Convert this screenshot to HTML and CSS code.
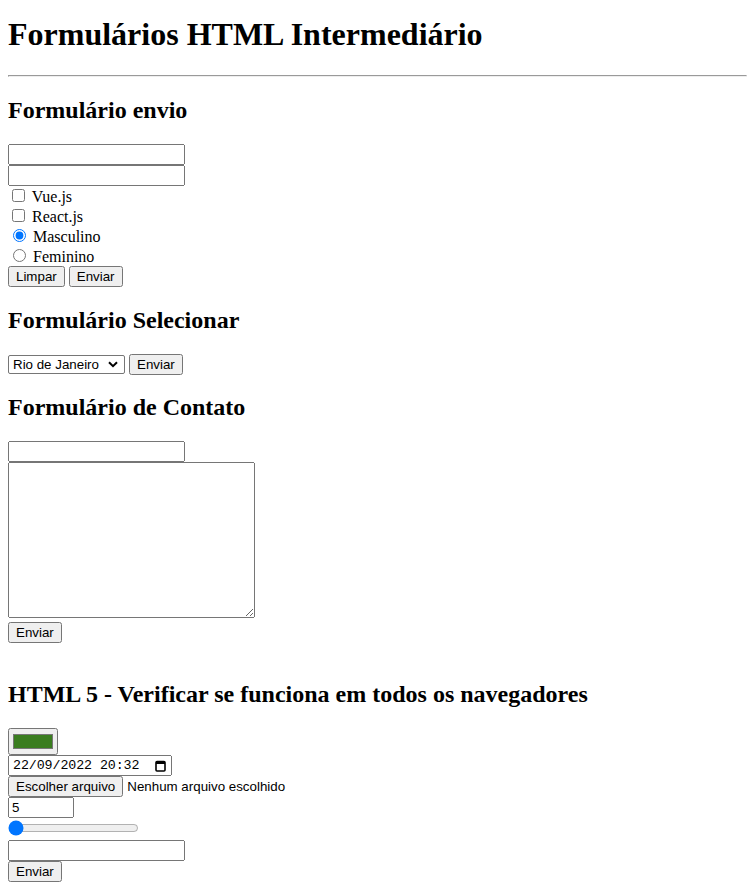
FILE: index.html
```html
<!DOCTYPE html>
<html lang="pt-BR">
<head>
<meta charset="utf-8">
<title>Formulários HTML Intermediário</title>
<link rel="stylesheet" href="styles.css">
</head>
<body class="page">
<h1 class="title">Formulários HTML Intermediário</h1>
<hr class="rule">
<h2 class="section">Formulário envio</h2>
<form class="form">
<input class="field" type="text"><br>
<input class="field" type="password"><br>
<input class="check" type="checkbox" id="vue"> <label for="vue">Vue.js</label><br>
<input class="check" type="checkbox" id="react"> <label for="react">React.js</label><br>
<input class="radio" type="radio" name="sexo" id="m" checked> <label for="m">Masculino</label><br>
<input class="radio" type="radio" name="sexo" id="f"> <label for="f">Feminino</label><br>
<input class="btn" type="reset" value="Limpar"> <input class="btn" type="submit" value="Enviar">
</form>
<h2 class="section">Formulário Selecionar</h2>
<form class="form">
<span class="select-wrap"><select class="select">
<option>São Paulo</option>
<option selected>Rio de Janeiro</option>
<option>Minas Gerais</option>
</select><svg class="chevron" width="10" height="7" viewBox="0 0 10 7"><path d="M1 1.2 L5 5.2 L9 1.2" fill="none" stroke="#000" stroke-width="2"/></svg></span> <input class="btn" type="submit" value="Enviar">
</form>
<h2 class="section">Formulário de Contato</h2>
<form class="form">
<input class="field" type="text"><br>
<textarea class="area"></textarea><br>
<input class="btn" type="submit" value="Enviar"><br><br>
</form>
<h2 class="section">HTML 5 - Verificar se funciona em todos os navegadores</h2>
<form class="form">
<input class="color" type="color" value="#3a7d1f"><br>
<span class="date-wrap"><input class="datetime" type="text" value="22/09/2022 20:32" readonly><svg class="calendar" width="11" height="12" viewBox="0 0 11 12"><rect x="1" y="1.5" width="9" height="9.5" rx="1" fill="none" stroke="#000" stroke-width="1.6"/><rect x="1" y="1.5" width="9" height="2.5" fill="#000"/></svg></span><br>
<button class="btn" type="button">Escolher arquivo</button> <span class="file-note">Nenhum arquivo escolhido</span><br>
<input class="number" type="number" value="5"><br>
<input class="range" type="range" min="0" max="100" value="0"><br>
<input class="field" type="email"><br>
<input class="btn" type="submit" value="Enviar">
</form>
</body>
</html>
```
FILE: styles.css
```css
.page {
  margin: 0;
  padding: 8px;
  font-family: "Liberation Serif", "Times New Roman", serif;
  font-size: 16px;
  color: #000;
  background: #fff;
}
.title {
  font-size: 32px;
  margin: 8.44px 0 21.44px;
}
.rule {
  margin: 8px -8px 8px 0;
}
.section {
  font-size: 24px;
  margin: 19.92px 0;
}
.form {
  margin: 0;
}
.field, .select, .btn, .area, .number, .file-note {
  font-family: "Liberation Sans", Arial, sans-serif;
  font-size: 13.333px;
}
.field {
  width: 177px;
  height: 21px;
  box-sizing: border-box;
}
.area {
  width: 247px;
  height: 156px;
  box-sizing: border-box;
}
.number {
  width: 66px;
  height: 21px;
  box-sizing: border-box;
}
.select-wrap {
  position: relative;
  display: inline-block;
  vertical-align: top;
  margin-top: 1px;
  height: 19px;
}
.select {
  appearance: none;
  -webkit-appearance: none;
  display: block;
  width: 117px;
  height: 19px;
  box-sizing: border-box;
  border: 1px solid #767676;
  border-radius: 2px;
  background: #fff;
  color: #000;
  padding: 0 0 0 4px;
  margin: 0;
}
.chevron {
  position: absolute;
  right: 7px;
  top: 6px;
  pointer-events: none;
}
.date-wrap {
  position: relative;
  display: inline-block;
}
.datetime {
  font-family: "Liberation Mono", "Courier New", monospace;
  font-size: 13.333px;
  width: 164px;
  height: 21px;
  box-sizing: border-box;
  padding: 1px 3px;
  margin: 0;
  letter-spacing: -0.1px;
}
.calendar {
  position: absolute;
  right: 6px;
  top: 5px;
  pointer-events: none;
}
.color {
  width: 50px;
  height: 27px;
  margin: 0;
}
.range {
  width: 131px;
  margin: 2px 0;
}
```
